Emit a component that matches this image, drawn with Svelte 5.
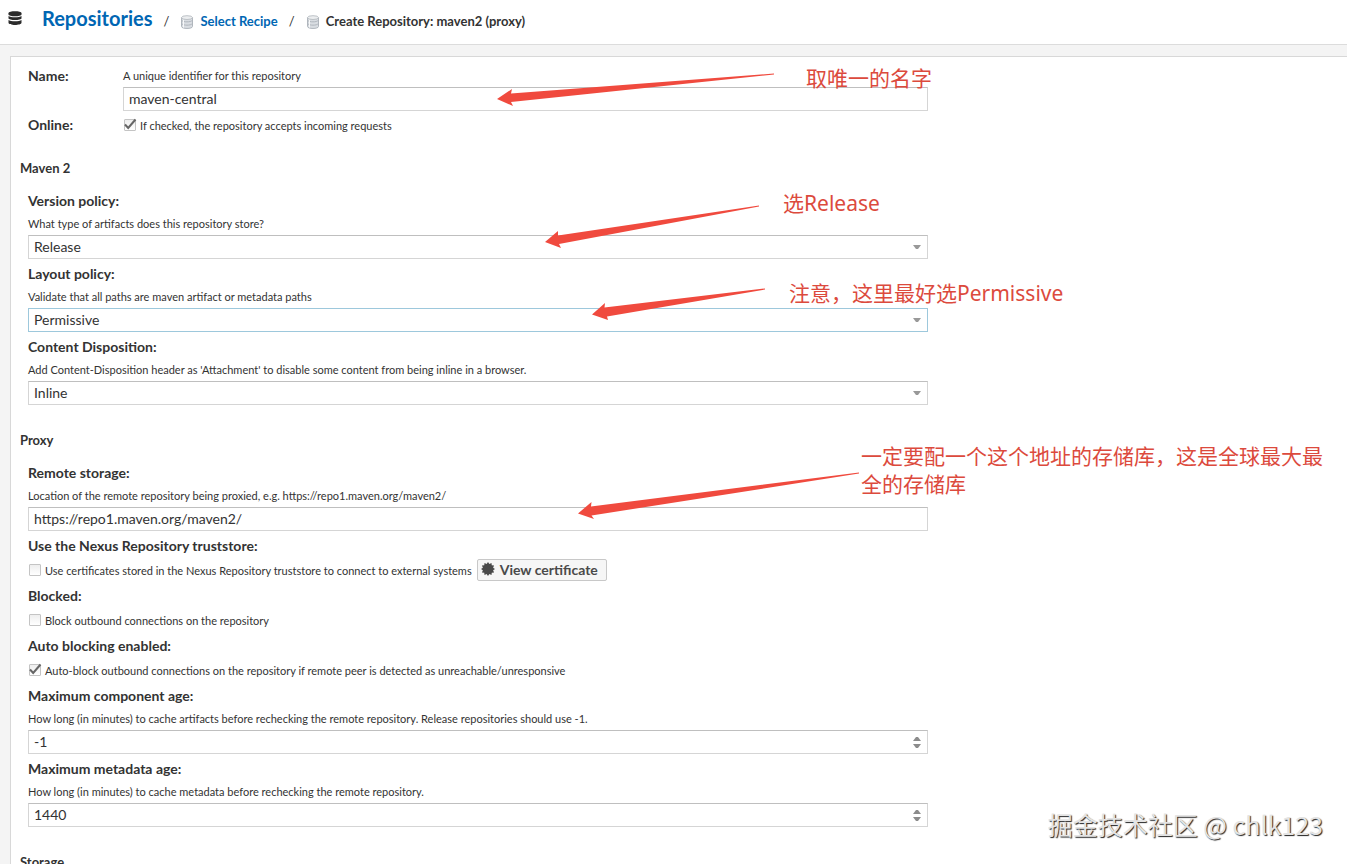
<script>
    /**
     * @type {string}
     */
    let name = "maven-central"
    let online = true

    let remoteUrl = "https://repo1.maven.org/maven2/"

    let policies = [
        {
            id: "version-policy",
            label: "Version policy:",
            help: "What type of artifacts does this repository store?",
            value: "Release",
            options: ["Release", "Snapshot", "Mixed"]
        },
        {
            id: "layout-policy",
            label: "Layout policy:",
            help: "Validate that all paths are maven artifact or metadata paths",
            value: "Permissive",
            options: ["Strict", "Permissive"],
            active: true
        },
        {
            id: "content-disposition",
            label: "Content Disposition:",
            help: "Add Content-Disposition header as 'Attachment' to disable some content from being inline in a browser.",
            value: "Inline",
            options: ["Inline", "Attachment"]
        }
    ]

    let flags = [
        {
            id: "truststore",
            label: "Use the Nexus Repository truststore:",
            text: "Use certificates stored in the Nexus Repository truststore to connect to external systems",
            checked: false,
            certificate: true
        },
        {
            id: "blocked",
            label: "Blocked:",
            text: "Block outbound connections on the repository",
            checked: false
        },
        {
            id: "auto-block",
            label: "Auto blocking enabled:",
            text: "Auto-block outbound connections on the repository if remote peer is detected as unreachable/unresponsive",
            checked: true
        }
    ]

    let ages = [
        {
            id: "component-age",
            label: "Maximum component age:",
            help: "How long (in minutes) to cache artifacts before rechecking the remote repository. Release repositories should use -1.",
            value: -1
        },
        {
            id: "metadata-age",
            label: "Maximum metadata age:",
            help: "How long (in minutes) to cache metadata before rechecking the remote repository.",
            value: 1440
        }
    ]

    // tip, upper barb, upper notch, tail, lower notch, lower barb
    const arrows = [
        "497,99 512,89 511,93.5 774,73.5 774,74.5 511,102 513,106",
        "545,242 558,231 558,235.5 759,205.5 759,206.5 559,244 561,248",
        "592,314.5 605,303 604.5,307.5 765,288.5 765,289.5 607,316.5 608,320",
        "578,513.5 591.5,502 591,506.5 859,472.5 859,473.5 591.5,515.5 594,519"
    ]

    // twelve-pointed badge
    const badge = Array.from({ length: 24 }, (_, i) => {
        const r = i % 2 ? 5.3 : 7
        const a = (i * Math.PI) / 12
        return `${(7 + r * Math.cos(a)).toFixed(2)},${(7 + r * Math.sin(a)).toFixed(2)}`
    }).join(" ")

    function step(index, amount) {
        ages[index].value += amount
    }
</script>

{#snippet greyDatabase()}
    <svg class="crumb-icon" viewBox="0 0 14 14" aria-hidden="true">
        <path d="M1.5 2.5v9c0 2.6 11 2.6 11 0v-9z" fill="#d9dde2" stroke="#b0b6bd" />
        <path d="M2 5.5c1 1.8 9 1.8 10 0M2 8.8c1 1.8 9 1.8 10 0" fill="none" stroke="#b0b6bd" />
        <path d="M3.5 4v8.5" stroke="#f7f8f9" />
        <ellipse cx="7" cy="2.6" rx="5.5" ry="1.9" fill="#eceef0" stroke="#bcc1c6" />
    </svg>
{/snippet}

{#snippet tick()}
    <svg class="tick" viewBox="0 0 14 14" aria-hidden="true">
        <path d="M2 6.5L5.2 10 12.5 1.5" fill="none" stroke="#666" stroke-width="2" />
    </svg>
{/snippet}

<div class="page">
    <header>
        <svg class="main-icon" viewBox="0 0 14 15" aria-hidden="true">
            <g fill="#2b2b2b">
                <path d="M.5 2.2C.5-.4 13.5-.4 13.5 2.2v1.2c0 2.4-13 2.4-13 0z" />
                <path d="M.5 5c2 1.7 11 1.7 13 0v2.2c0 2.4-13 2.4-13 0z" />
                <path d="M.5 9c2 1.7 11 1.7 13 0v2.8c0 2.9-13 2.9-13 0z" />
            </g>
        </svg>
        <nav aria-label="Breadcrumb">
            <a class="root" href="#repositories">Repositories</a>
            <span class="slash">/</span>
            <a class="crumb" href="#recipe">{@render greyDatabase()}Select Recipe</a>
            <span class="slash">/</span>
            <span class="crumb">{@render greyDatabase()}Create Repository: maven2 (proxy)</span>
        </nav>
    </header>

    <main>
        <form class="panel" on:submit|preventDefault>
            <div class="general">
                <label class="title" for="name">Name:</label>
                <div>
                    <p class="help">A unique identifier for this repository</p>
                    <input class="box" id="name" type="text" bind:value={name} />
                </div>
                <label class="title" for="online">Online:</label>
                <label class="check">
                    <input id="online" type="checkbox" bind:checked={online} />
                    {#if online}{@render tick()}{/if}
                    <span>If checked, the repository accepts incoming requests</span>
                </label>
            </div>

            <section>
                <h2>Maven 2</h2>
                {#each policies as policy}
                    <div class="field">
                        <label class="title" for={policy.id}>{policy.label}</label>
                        <p class="help">{policy.help}</p>
                        <div class="control">
                            <select class="box" class:active={policy.active} id={policy.id} bind:value={policy.value}>
                                {#each policy.options as option}
                                    <option>{option}</option>
                                {/each}
                            </select>
                            <svg class="caret" viewBox="0 0 8 4" aria-hidden="true">
                                <path d="M0 0h8L5 4H3z" fill="#999" />
                            </svg>
                        </div>
                    </div>
                {/each}
            </section>

            <section>
                <h2>Proxy</h2>
                <div class="field">
                    <label class="title" for="remote">Remote storage:</label>
                    <p class="help">Location of the remote repository being proxied, e.g. https://repo1.maven.org/maven2/</p>
                    <input class="box" id="remote" type="text" bind:value={remoteUrl} />
                </div>
                {#each flags as flag}
                    <div class="flag">
                        <label class="title" for={flag.id}>{flag.label}</label>
                        <div class="flag-row">
                            <label class="check">
                                <input type="checkbox" id={flag.id} bind:checked={flag.checked} />
                                {#if flag.checked}{@render tick()}{/if}
                                <span>{flag.text}</span>
                            </label>
                            {#if flag.certificate}
                                <button class="certificate" type="button">
                                    <svg viewBox="0 0 14 14" aria-hidden="true">
                                        <polygon points={badge} fill="#4a4a4a" />
                                    </svg>
                                    View certificate
                                </button>
                            {/if}
                        </div>
                    </div>
                {/each}
                {#each ages as age, index}
                    <div class="field">
                        <label class="title" for={age.id}>{age.label}</label>
                        <p class="help">{age.help}</p>
                        <div class="control">
                            <input class="box" id={age.id} type="number" bind:value={age.value} />
                            <div class="spinner">
                                <button type="button" aria-label="Increase" on:click={() => step(index, 1)}>
                                    <svg viewBox="0 0 8 4" aria-hidden="true"><path d="M0 4h8L5 0H3z" fill="#8c8c8c" /></svg>
                                </button>
                                <button type="button" aria-label="Decrease" on:click={() => step(index, -1)}>
                                    <svg viewBox="0 0 8 4" aria-hidden="true"><path d="M0 0h8L5 4H3z" fill="#8c8c8c" /></svg>
                                </button>
                            </div>
                        </div>
                    </div>
                {/each}
            </section>

            <section>
                <h2>Storage</h2>
            </section>
        </form>
    </main>

    <!-- notes drawn over the form -->
    <svg class="arrows" aria-hidden="true">
        {#each arrows as points}
            <polygon {points} fill="#f04a3e" />
        {/each}
    </svg>
    <div class="note note-name">取唯一的名字</div>
    <div class="note note-version">选Release</div>
    <div class="note note-layout">注意，这里最好选Permissive</div>
    <div class="note note-remote">一定要配一个这个地址的存储库，这是全球最大最全的存储库</div>
    <div class="watermark">掘金技术社区 @ chlk123</div>
</div>

<style>
    :global(body) {
        margin: 0;
        background: #f4f4f4;
    }
    .page {
        position: relative;
        height: 100vh;
        overflow: hidden;
        display: flex;
        flex-direction: column;
        font-family: Lato, "Noto Sans CJK SC", sans-serif;
        font-size: 11px;
        color: #333;
    }
    .page * {
        box-sizing: border-box;
    }

    header {
        flex: none;
        display: flex;
        align-items: center;
        height: 45px;
        padding: 0 8px 8px;
        background: #fff;
        border-bottom: 1px solid #dcdcdc;
    }
    .main-icon {
        width: 14px;
        height: 15px;
        margin-right: 20px;
    }
    nav {
        display: flex;
        align-items: baseline;
        white-space: nowrap;
    }
    nav a {
        color: #0066b3;
        text-decoration: none;
    }
    .root {
        font-size: 20px;
        font-weight: 700;
    }
    .slash {
        width: 28px;
        font-size: 13px;
        text-align: center;
    }
    .crumb {
        font-size: 13px;
        font-weight: 700;
    }
    .crumb-icon {
        width: 14px;
        height: 14px;
        margin-right: 6px;
        vertical-align: -3px;
    }

    main {
        flex: 1;
        min-height: 0;
        padding: 11px 0 0 10px;
        overflow: auto;
        scrollbar-width: none;
    }
    .panel {
        padding: 8px 9px 20px;
        background: #fff;
        border: 1px solid #d8d8d8;
        border-right: none;
    }
    .general {
        display: grid;
        grid-template-columns: 95px 1fr;
        row-gap: 3px;
        max-width: 908px;
        padding-left: 8px;
    }
    .general .title {
        line-height: 22px;
    }
    .general .check {
        height: 22px;
    }
    section {
        margin-top: 20px;
        max-width: 908px;
    }
    h2 {
        margin: 0 0 9px;
        font-size: 13px;
        font-weight: 700;
        line-height: 24px;
    }
    .title {
        display: block;
        font-size: 14px;
        font-weight: 700;
        line-height: 24px;
    }
    .help {
        margin: 0;
        line-height: 22px;
        white-space: nowrap;
    }
    .field {
        margin-left: 8px;
        padding-bottom: 3px;
    }
    .control {
        position: relative;
    }
    .box {
        display: block;
        width: 100%;
        height: 24px;
        margin: 0;
        padding: 0 5px 2px;
        border: 1px solid #d5d5d5;
        border-top-color: #bfbfbf;
        border-radius: 0;
        outline: none;
        background: #fff;
        color: #333;
        font-family: inherit;
        font-size: 14px;
        appearance: none;
    }
    .box.active {
        border-color: #9dc8dc;
    }
    .box[type="number"] {
        appearance: textfield;
    }
    .caret {
        position: absolute;
        top: 10px;
        right: 7px;
        width: 8px;
        height: 4px;
        pointer-events: none;
    }
    .spinner {
        position: absolute;
        top: 5px;
        right: 6px;
        display: flex;
        flex-direction: column;
    }
    .spinner button {
        display: flex;
        align-items: center;
        justify-content: center;
        width: 10px;
        height: 7px;
        padding: 0;
        border: none;
        background: none;
    }
    .spinner svg {
        width: 8px;
        height: 4px;
    }

    .flag {
        margin-left: 8px;
        padding-bottom: 2px;
    }
    .flag-row {
        display: flex;
        align-items: center;
        height: 24px;
    }
    .check {
        position: relative;
        display: flex;
        align-items: center;
        white-space: nowrap;
    }
    .check input {
        width: 12px;
        height: 12px;
        margin: 0 4px 0 1px;
        border: 1px solid #c4c4c4;
        border-radius: 1px;
        background: linear-gradient(#eee, #fff);
        appearance: none;
    }
    .tick {
        position: absolute;
        left: 0;
        width: 14px;
        height: 14px;
        pointer-events: none;
    }
    .certificate {
        display: flex;
        align-items: center;
        gap: 5px;
        height: 22px;
        margin-left: 5px;
        padding: 0 8px 2px 3px;
        border: 1px solid #c8c8c8;
        border-radius: 2px;
        background: #f6f6f6;
        color: #4a4a4a;
        font-family: inherit;
        font-size: 14px;
        font-weight: 700;
    }
    .certificate svg {
        width: 14px;
        height: 14px;
    }

    .arrows {
        position: absolute;
        top: 0;
        left: 0;
        width: 100%;
        height: 100%;
        pointer-events: none;
    }
    .note {
        position: absolute;
        color: #dc4a3d;
        font-family: "Noto Sans", "Noto Sans CJK SC", sans-serif;
        font-size: 21px;
        line-height: 28px;
        pointer-events: none;
    }
    .note-name {
        top: 64px;
        left: 806px;
    }
    .note-version {
        top: 189px;
        left: 783px;
    }
    .note-layout {
        top: 279px;
        left: 789px;
    }
    .note-remote {
        top: 442px;
        left: 861px;
        width: 470px;
    }
    .watermark {
        position: absolute;
        right: 24px;
        bottom: 22px;
        color: #e4e4e4;
        font-family: "Noto Sans CJK SC", sans-serif;
        font-size: 25px;
        line-height: 36px;
        text-shadow: 1px 1px 1px #222;
        pointer-events: none;
    }
</style>
